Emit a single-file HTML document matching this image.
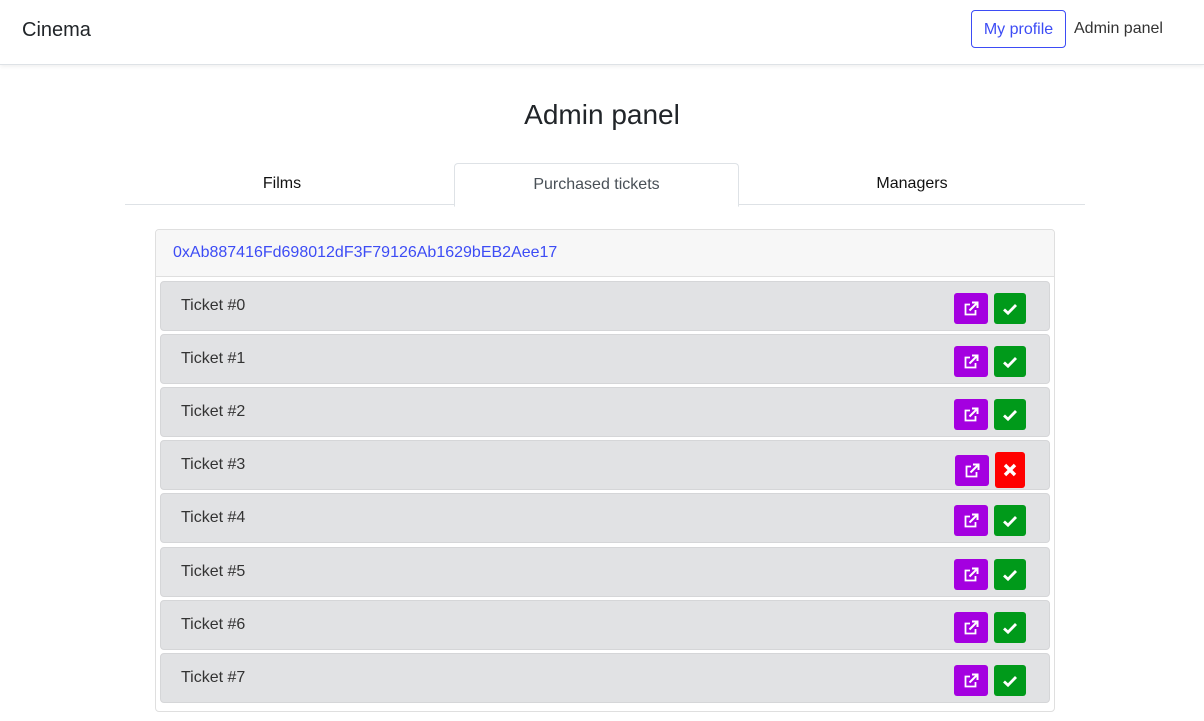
<!DOCTYPE html>
<html><head><style>
body{margin:0;width:1204px;height:721px;overflow:hidden;background:#fff;font-family:"Liberation Sans",sans-serif;position:relative}
.nav{position:absolute;left:0;top:0;width:1204px;height:64px;border-bottom:1px solid #dee2e6;box-shadow:0 2px 4px rgba(0,0,0,.06);background:#fff}
.brand{position:absolute;left:22px;top:19px;font-size:20px;color:#212529}
.myp{position:absolute;left:971px;top:10px;width:93px;height:36px;border:1px solid #3d4cf5;border-radius:4px;color:#3d4cf5;font-size:16px;text-align:center;line-height:37px}
.adm{position:absolute;left:1074px;top:20px;font-size:16px;color:#333}
h1{position:absolute;left:0;width:1204px;top:99px;margin:0;text-align:center;font-weight:400;font-size:28px;color:#212529}
.tabline{position:absolute;left:125px;top:204px;width:960px;border-top:1px solid #dee2e6}
.tab{position:absolute;top:175px;font-size:16px;color:#111;text-align:center}
.tact{position:absolute;left:454px;top:163px;width:283px;height:42px;border:1px solid #dee2e6;border-bottom:1px solid #fff;border-radius:4px 4px 0 0;background:#fff;color:#495057;font-size:16px;text-align:center;line-height:42px}
.card{position:absolute;left:155px;top:229px;width:898px;height:481px;border:1px solid #dfdfdf;border-radius:4px}
.ch{height:46px;background:#f7f7f7;border-bottom:1px solid #dfdfdf;color:#3d4cf5;font-size:16px;padding-left:17px;line-height:46px;border-radius:4px 4px 0 0}
.row{position:absolute;left:160px;width:888px;height:48px;background:#e1e2e4;border:1px solid #d5d6d8;border-radius:4px}
.row span{position:absolute;left:20px;top:15px;font-size:16px;color:#333}
.b{position:absolute;width:34px;height:31px;border-radius:3px;display:flex;align-items:center;justify-content:center}
.p{background:#a400e0;left:793px;top:11px}
.g{background:#009a1a;left:833px;top:11px;width:32px}
.r{background:#ff0000;left:834px;top:11px;width:30px;height:36px}
</style></head><body>
<div class="nav"><div class="brand">Cinema</div><div class="myp">My profile</div><div class="adm">Admin panel</div></div>
<h1>Admin panel</h1>
<div class="tabline"></div>
<div class="tab" style="left:125px;width:314px">Films</div>
<div class="tact">Purchased tickets</div>
<div class="tab" style="left:739px;width:346px">Managers</div>
<div class="card"><div class="ch">0xAb887416Fd698012dF3F79126Ab1629bEB2Aee17</div></div>
<svg width="0" height="0" style="position:absolute"><defs>
<symbol id="e" viewBox="0 0 16 16"><path d="M7 3.5H2.5v10h10V9" fill="none" stroke="#fff" stroke-width="1.8"/><path d="M6.5 9.5L14 2M9 1.5h5.5v5.5" fill="none" stroke="#fff" stroke-width="2"/></symbol>
<symbol id="c" viewBox="0 0 16 16"><path d="M2 8.5l4 3.7L14 4" fill="none" stroke="#fff" stroke-width="2.8"/></symbol>
<symbol id="x" viewBox="0 0 16 16"><path d="M3 3l10 10M13 3L3 13" fill="none" stroke="#fff" stroke-width="3.4"/></symbol>
</defs></svg>
<div class="row" style="top:281px"><span>Ticket #0</span><div class="b p"><svg width="16" height="16"><use href="#e"/></svg></div><div class="b g"><svg width="16" height="16"><use href="#c"/></svg></div></div>
<div class="row" style="top:334px"><span>Ticket #1</span><div class="b p"><svg width="16" height="16"><use href="#e"/></svg></div><div class="b g"><svg width="16" height="16"><use href="#c"/></svg></div></div>
<div class="row" style="top:387px"><span>Ticket #2</span><div class="b p"><svg width="16" height="16"><use href="#e"/></svg></div><div class="b g"><svg width="16" height="16"><use href="#c"/></svg></div></div>
<div class="row" style="top:440px"><span>Ticket #3</span><div class="b p" style="left:794px;top:14px"><svg width="16" height="16"><use href="#e"/></svg></div><div class="b r"><svg width="16" height="16"><use href="#x"/></svg></div></div>
<div class="row" style="top:493px"><span>Ticket #4</span><div class="b p"><svg width="16" height="16"><use href="#e"/></svg></div><div class="b g"><svg width="16" height="16"><use href="#c"/></svg></div></div>
<div class="row" style="top:547px"><span>Ticket #5</span><div class="b p"><svg width="16" height="16"><use href="#e"/></svg></div><div class="b g"><svg width="16" height="16"><use href="#c"/></svg></div></div>
<div class="row" style="top:600px"><span>Ticket #6</span><div class="b p"><svg width="16" height="16"><use href="#e"/></svg></div><div class="b g"><svg width="16" height="16"><use href="#c"/></svg></div></div>
<div class="row" style="top:653px"><span>Ticket #7</span><div class="b p"><svg width="16" height="16"><use href="#e"/></svg></div><div class="b g"><svg width="16" height="16"><use href="#c"/></svg></div></div>
</body></html>
